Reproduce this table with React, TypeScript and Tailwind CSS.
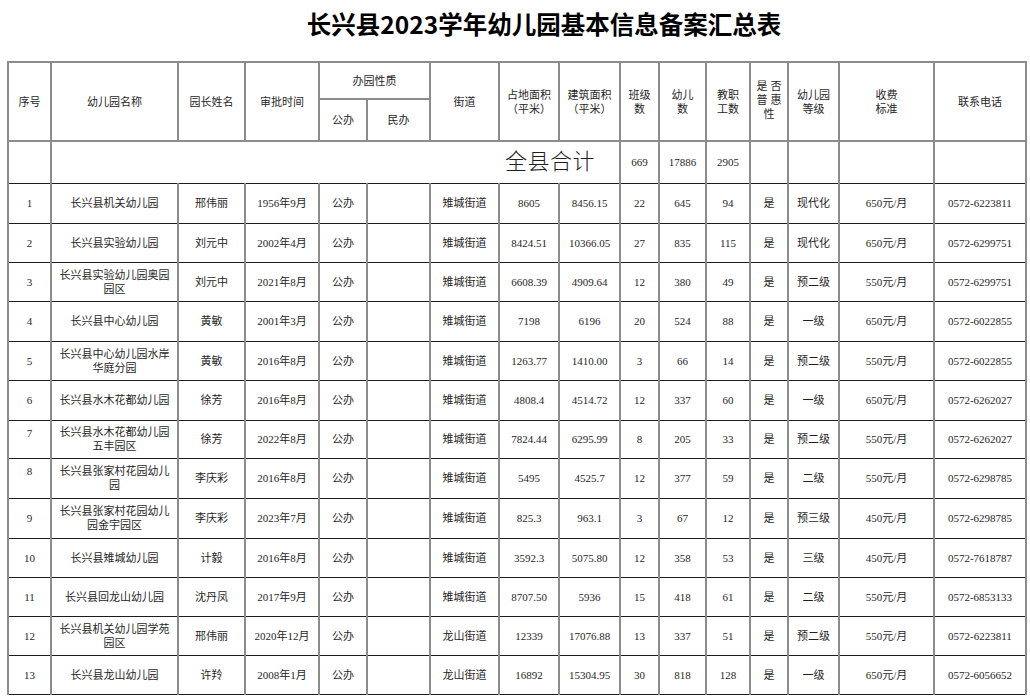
import React from "react";

type Row = {
  no: string;
  name: string[];
  head: string;
  date: string;
  street: string;
  land: string;
  build: string;
  classes: string;
  kids: string;
  staff: string;
  level: string;
  fee: string;
  phone: string;
  h: string;
  numTop?: boolean;
};

const rows: Row[] = [
  { no: "1", name: ["长兴县机关幼儿园"], head: "邢伟丽", date: "1956年9月", street: "雉城街道", land: "8605", build: "8456.15", classes: "22", kids: "645", staff: "94", level: "现代化", fee: "650元/月", phone: "0572-6223811", h: "h-[40px]" },
  { no: "2", name: ["长兴县实验幼儿园"], head: "刘元中", date: "2002年4月", street: "雉城街道", land: "8424.51", build: "10366.05", classes: "27", kids: "835", staff: "115", level: "现代化", fee: "650元/月", phone: "0572-6299751", h: "h-[39px]" },
  { no: "3", name: ["长兴县实验幼儿园奥园", "园区"], head: "刘元中", date: "2021年8月", street: "雉城街道", land: "6608.39", build: "4909.64", classes: "12", kids: "380", staff: "49", level: "预二级", fee: "550元/月", phone: "0572-6299751", h: "h-[39px]" },
  { no: "4", name: ["长兴县中心幼儿园"], head: "黄敏", date: "2001年3月", street: "雉城街道", land: "7198", build: "6196", classes: "20", kids: "524", staff: "88", level: "一级", fee: "650元/月", phone: "0572-6022855", h: "h-[40px]" },
  { no: "5", name: ["长兴县中心幼儿园水岸", "华庭分园"], head: "黄敏", date: "2016年8月", street: "雉城街道", land: "1263.77", build: "1410.00", classes: "3", kids: "66", staff: "14", level: "预二级", fee: "550元/月", phone: "0572-6022855", h: "h-[39px]" },
  { no: "6", name: ["长兴县水木花都幼儿园"], head: "徐芳", date: "2016年8月", street: "雉城街道", land: "4808.4", build: "4514.72", classes: "12", kids: "337", staff: "60", level: "一级", fee: "650元/月", phone: "0572-6262027", h: "h-[40px]" },
  { no: "7", name: ["长兴县水木花都幼儿园", "五丰园区"], head: "徐芳", date: "2022年8月", street: "雉城街道", land: "7824.44", build: "6295.99", classes: "8", kids: "205", staff: "33", level: "预二级", fee: "550元/月", phone: "0572-6262027", h: "h-[38px]", numTop: true },
  { no: "8", name: ["长兴县张家村花园幼儿", "园"], head: "李庆彩", date: "2016年8月", street: "雉城街道", land: "5495", build: "4525.7", classes: "12", kids: "377", staff: "59", level: "二级", fee: "550元/月", phone: "0572-6298785", h: "h-[40px]", numTop: true },
  { no: "9", name: ["长兴县张家村花园幼儿", "园金宇园区"], head: "李庆彩", date: "2023年7月", street: "雉城街道", land: "825.3", build: "963.1", classes: "3", kids: "67", staff: "12", level: "预三级", fee: "450元/月", phone: "0572-6298785", h: "h-[40px]" },
  { no: "10", name: ["长兴县雉城幼儿园"], head: "计毅", date: "2016年8月", street: "雉城街道", land: "3592.3", build: "5075.80", classes: "12", kids: "358", staff: "53", level: "三级", fee: "450元/月", phone: "0572-7618787", h: "h-[39px]" },
  { no: "11", name: ["长兴县回龙山幼儿园"], head: "沈丹凤", date: "2017年9月", street: "雉城街道", land: "8707.50", build: "5936", classes: "15", kids: "418", staff: "61", level: "二级", fee: "550元/月", phone: "0572-6853133", h: "h-[39px]" },
  { no: "12", name: ["长兴县机关幼儿园学苑", "园区"], head: "邢伟丽", date: "2020年12月", street: "龙山街道", land: "12339", build: "17076.88", classes: "13", kids: "337", staff: "51", level: "预二级", fee: "550元/月", phone: "0572-6223811", h: "h-[39px]" },
  { no: "13", name: ["长兴县龙山幼儿园"], head: "许羚", date: "2008年1月", street: "龙山街道", land: "16892", build: "15304.95", classes: "30", kids: "818", staff: "128", level: "一级", fee: "650元/月", phone: "0572-6056652", h: "h-[39px]" },
];

const widths = [
  "w-[43px]", "w-[127px]", "w-[67px]", "w-[74px]", "w-[48px]", "w-[63px]", "w-[69px]", "w-[60px]",
  "w-[61px]", "w-[39px]", "w-[47px]", "w-[44px]", "w-[38px]", "w-[51px]", "w-[95px]", "w-[92px]",
];

const th = "border-2 border-[#8c8c8c] text-center align-middle font-normal leading-[14px] px-0";
const tdBase = "border-x-2 border-x-[#8c8c8c] border-y border-y-[#1c1c1c] text-center leading-[14px] px-0";
const td = `${tdBase} align-middle`;
const tdTotal = `${td} border-t-2 border-t-[#8c8c8c]`;

export default function App() {
  return (
    <div className="w-[1030px] h-[697px] bg-white overflow-hidden text-[#1f1f1f] font-['Liberation_Serif','Noto_Sans_CJK_SC',serif]">
      <div className="h-[48px] flex items-center justify-center pl-[58px]">
        <h1 className="text-[24.5px] font-bold text-black font-['Noto_Sans_CJK_SC',sans-serif]">
          长兴县2023学年幼儿园基本信息备案汇总表
        </h1>
      </div>

      <div className="mt-[13px] pl-[7px]">
        <table className="table-fixed border-collapse w-[1018px] text-[11px]">
          <colgroup>
            {widths.map((w, i) => (
              <col key={i} className={w} />
            ))}
          </colgroup>
          <thead>
            <tr className="h-[37px]">
              <th rowSpan={2} className={th}>序号</th>
              <th rowSpan={2} className={th}>幼儿园名称</th>
              <th rowSpan={2} className={th}>园长姓名</th>
              <th rowSpan={2} className={th}>审批时间</th>
              <th colSpan={2} className={th}>办园性质</th>
              <th rowSpan={2} className={th}>街道</th>
              <th rowSpan={2} className={th}>占地面积<br />（平米）</th>
              <th rowSpan={2} className={th}>建筑面积<br />（平米）</th>
              <th rowSpan={2} className={th}>班级<br />数</th>
              <th rowSpan={2} className={th}>幼儿<br />数</th>
              <th rowSpan={2} className={th}>教职<br />工数</th>
              <th rowSpan={2} className={`${th} tracking-[3px] pl-[3px] pb-[4px]`}>是否<br />普惠<br />性</th>
              <th rowSpan={2} className={th}>幼儿园<br />等级</th>
              <th rowSpan={2} className={th}>收费<br />标准</th>
              <th rowSpan={2} className={th}>联系电话</th>
            </tr>
            <tr className="h-[42px]">
              <th className={th}>公办</th>
              <th className={th}>民办</th>
            </tr>
          </thead>
          <tbody>
            <tr className="h-[42px]">
              <td className={tdTotal} />
              <td colSpan={8} className={`${tdTotal} text-right pr-[24px]`}>
                <span className="text-[22px] font-['Noto_Sans_CJK_SC',sans-serif] font-light tracking-[0.5px]">全县合计</span>
              </td>
              <td className={tdTotal}>669</td>
              <td className={tdTotal}>17886</td>
              <td className={tdTotal}>2905</td>
              <td className={tdTotal} />
              <td className={tdTotal} />
              <td className={tdTotal} />
              <td className={tdTotal} />
            </tr>
            {rows.map((r) => (
              <tr key={r.no} className={r.h}>
                <td className={r.numTop ? `${tdBase} align-top pt-[5px]` : td}>{r.no}</td>
                <td className={td}>
                  {r.name.map((n, i) => (
                    <div key={i}>{n}</div>
                  ))}
                </td>
                <td className={td}>{r.head}</td>
                <td className={td}>{r.date}</td>
                <td className={td}>公办</td>
                <td className={td} />
                <td className={td}>{r.street}</td>
                <td className={td}>{r.land}</td>
                <td className={td}>{r.build}</td>
                <td className={td}>{r.classes}</td>
                <td className={td}>{r.kids}</td>
                <td className={td}>{r.staff}</td>
                <td className={td}>是</td>
                <td className={td}>{r.level}</td>
                <td className={td}>{r.fee}</td>
                <td className={td}>{r.phone}</td>
              </tr>
            ))}
          </tbody>
        </table>
      </div>
    </div>
  );
}
